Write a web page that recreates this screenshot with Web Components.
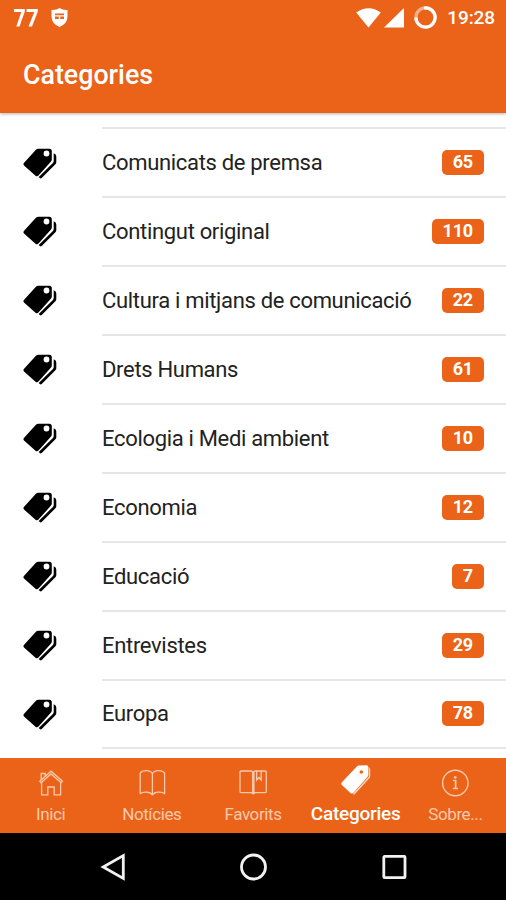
<!DOCTYPE html>
<html lang="ca">
<head>
<meta charset="utf-8">
<title>Categories</title>
<style>
    html, body { margin: 0; height: 100%; }
    body {
        --brand: #ea6319;
        font-family: Roboto, "Liberation Sans", sans-serif;
        background: #fff;
        overflow: hidden;
    }
</style>
</head>
<body>
<app-screen></app-screen>
<script>
const ICONS = {
    tags: `<svg width="34" height="31" viewBox="0 0 34 31">
        <path fill-rule="evenodd" d="M15.500 .8H26.300Q28.800 .8 28.800 3.300V11.600Q28.800 12.800 28 13.600L15.500 27.500Q14 29 12.500 27.700L1 17.400Q-.2 16.200 1.100 14.800L12.700 2Q13.800.8 15.500.8zM23.500 2.600A2.900 2.900 0 1 0 23.500 8.400A2.900 2.900 0 1 0 23.500 2.600z"/>
        <path d="M30.700 5.300Q33.300 6 33.300 8.600V14.300Q33.300 15.400 32.400 16.300L18.700 30Q17.700 30.800 16.800 30L15.700 29L29.900 14.900Q30.700 14 30.700 13z"/></svg>`,
    home: `<svg width="28" height="28" viewBox="0 0 28 28" fill="none" stroke="currentColor" stroke-width="1.300">
        <path d="M4.600 13V25.800H10.800V18H17.200V25.800H23.600V13M2.800 12.200L14 2.200L25.400 12.200L24.200 13.700L14 4.900L4 13.700zM4.200 10.500V4.500H8.200V7"/></svg>`,
    book: `<svg width="28" height="28" viewBox="0 0 28 28" fill="none" stroke="currentColor" stroke-width="1.300" stroke-linejoin="round">
        <path d="M14.400 4.800C12.400 .8 4.500 .8 2.200 4.200V24.700C5 22.400 12 22.400 14.400 25.800C16.800 22.400 23.800 22.400 26.600 24.700V4.200C24.200 .8 16.400 .8 14.400 4.800zV25.800"/></svg>`,
    bookmarks: `<svg width="28" height="28" viewBox="0 0 28 28" fill="none" stroke="currentColor" stroke-width="1.300">
        <path d="M2.200 2H12.400L14.200 3L16 2H26Q27.300 2 27.300 3.200V22.500Q27.300 23.700 26 23.700H16L14.200 25L12.400 23.700H2.200Q1 23.700 1 22.500V3.200Q1 2 2.200 2zM13.600 3V24.500M14.900 3V24.500M17.600 2V11L19.900 8.500L22.200 11V2"/></svg>`,
    pricetag: `<svg width="30" height="30" viewBox="0 0 30 30" fill="currentColor">
        <path fill-rule="evenodd" d="M18 .5L25.300 .2Q27.300.2 27.400 2.200V9.800Q27.400 10.800 26.800 11.600L12.600 27.800Q11 29.300 9.500 28L.9 20Q-.3 18.600.9 17.200L15.600 1.800Q16.600.6 18 .5zM20.300 5.200A1.800 1.800 0 1 0 20.300 8.800A1.800 1.800 0 1 0 20.300 5.200z"/>
        <path d="M28 2.300Q29.200 2.800 29.200 4V11.500Q29.200 12.300 28.600 13L14 29Q13 30 11.800 29.300L27.500 12Q28 11.400 28 10.600z" opacity=".75"/></svg>`,
    info: `<svg width="28" height="28" viewBox="0 0 28 28" fill="none" stroke="currentColor" stroke-width="1.400">
        <circle cx="14.300" cy="14" r="12.700"/><path d="M12 11.500H14.600V19.300M11.800 19.500H17" stroke-width="1.700"/><circle cx="14.200" cy="8.300" r="1.400" fill="currentColor" stroke="none"/></svg>`
};

class StatusBar extends HTMLElement {
    constructor(){
        super()
        this.attachShadow({mode: "open"})
    }

    connectedCallback() {
        this.shadowRoot.innerHTML = `<style>
        :host{
            display: flex;
            align-items: center;
            height: 35px;
            padding: 0 11px 0 14px;
            color: #fff;
        }
        svg{ display: block; fill: #fff; }
        .spacer{ flex: 1; }
        .shield{ margin-left: 13px; }
        .signal{ margin-left: 3px; }
        .ring{ margin-left: 10px; }
        .time{
            margin-left: 10px;
            font-size: 19px;
            font-weight: 500;
            line-height: 36px;
            letter-spacing: -.1px;
            padding-top: 1px;
        }
        </style>
        <svg width="24" height="18" viewBox="0 0 24 18"><path d="M0 0H10.800V2.500L5.500 17.500H2.300L7.300 3H0zM12.600 0H23.800V2.500L18 17.500H14.500L20.300 3H12.600z"/></svg>
        <svg class="shield" width="17" height="19" viewBox="0 0 17 19"><path fill-rule="evenodd" d="M8.500 0Q12 2.500 16.500 2V8.500Q16.500 15.500 8.500 19Q.5 15.500.5 8.500V2Q5 2.500 8.500 0zM4 5.500V7.200H13V5.500zM4 8.500V11H7.800V8.500zM9.200 8.500V11H13V8.500z"/></svg>
        <div class="spacer"></div>
        <svg width="25" height="20" viewBox="0 0 25 20"><path d="M.2 4.500Q12.500-4 24.800 4.500L12.500 19.500z"/></svg>
        <svg class="signal" width="20" height="20" viewBox="0 0 20 20"><path d="M20 0V19.500H0z"/></svg>
        <svg class="ring" width="23" height="23" viewBox="0 0 23 23" style="fill:none;stroke:#fff;stroke-width:3.200">
            <circle cx="11.500" cy="11.500" r="9.600" opacity=".5"/><path d="M10 2A9.600 9.600 0 1 1 1.900 11.500"/></svg>
        <span class="time"><slot></slot></span>`
    }
}

class AppHeader extends HTMLElement {
    constructor(){
        super()
        this.attachShadow({mode: "open"})
    }

    connectedCallback() {
        this.shadowRoot.innerHTML = `<style>
        :host{
            display: block;
            height: 113px;
            flex: none;
            background: var(--brand);
            box-shadow: 0 1px 3px rgba(0,0,0,.3);
            z-index: 1;
        }
        h1{
            margin: 0;
            padding-left: 23px;
            color: #fff;
            font-size: 26.800px;
            font-weight: 500;
            line-height: 80px;
        }
        </style>
        <status-bar>19:28</status-bar>
        <h1><slot></slot></h1>`
    }
}

class CategoryItem extends HTMLElement {
    constructor(){
        super()
        this.attachShadow({mode: "open"})
    }

    connectedCallback() {
        this.shadowRoot.innerHTML = `<style>
        :host{
            display: flex;
            height: 68.950px;
            padding-left: 23px;
        }
        svg{ display: block; margin-top: 18.500px; }
        .inner{
            flex: 1;
            display: flex;
            align-items: center;
            justify-content: space-between;
            box-sizing: border-box;
            margin-left: 45px;
            padding-right: 22px;
            border-bottom: 2px solid #e6e6e6;
        }
        .label{
            font-size: 22px;
            letter-spacing: -.32px;
            color: #222;
            white-space: nowrap;
        }
        .badge{
            padding: 0 11px;
            height: 25px;
            border-radius: 5px;
            background: var(--brand);
            color: #fff;
            font-size: 18px;
            font-weight: 700;
            line-height: 23px;
            letter-spacing: -.2px;
        }
        </style>
        ${ICONS.tags}
        <div class="inner">
            <span class="label"><slot></slot></span>
            <span class="badge">${this.getAttribute('count')}</span>
        </div>`
    }
}

class CategoryList extends HTMLElement {
    constructor(){
        super()
        this.attachShadow({mode: "open"})
    }

    connectedCallback() {
        this.shadowRoot.innerHTML = `<style>
        :host{
            display: block;
            flex: 1;
            min-height: 0;
            overflow: hidden;
            background: #fff;
        }
        .previous{
            height: 14px;
            margin-left: 102px;
            border-bottom: 2px solid #e6e6e6;
        }
        </style>
        <div class="previous"></div>
        <slot></slot>`
    }
}

class TabItem extends HTMLElement {
    constructor(){
        super()
        this.attachShadow({mode: "open"})
    }

    connectedCallback() {
        this.shadowRoot.innerHTML = `<style>
        :host{
            display: flex;
            flex-direction: column;
            align-items: center;
            color: #fac9ab;
            font-size: 17px;
            letter-spacing: -.4px;
        }
        .icon{
            display: flex;
            align-items: center;
            height: 30px;
            margin-top: 10px;
        }
        .label{ line-height: 20px; margin-top: 6px; white-space: nowrap; }
        :host([active]){
            color: #fff;
            font-size: 19px;
            font-weight: 500;
            letter-spacing: -.25px;
            padding-left: 3px;
        }
        :host([active]) .icon{ margin-top: 7px; }
        :host([active]) .label{ margin-top: 9px; }
        </style>
        <span class="icon">${ICONS[this.getAttribute('icon')]}</span>
        <span class="label"><slot></slot></span>`
    }
}

class TabBar extends HTMLElement {
    constructor(){
        super()
        this.attachShadow({mode: "open"})
    }

    connectedCallback() {
        this.shadowRoot.innerHTML = `<style>
        :host{
            display: grid;
            grid-template-columns: repeat(5, minmax(0, 1fr));
            flex: none;
            height: 75px;
            background: var(--brand);
        }
        </style>
        <slot></slot>`
    }
}

class SystemNav extends HTMLElement {
    constructor(){
        super()
        this.attachShadow({mode: "open"})
    }

    connectedCallback() {
        this.shadowRoot.innerHTML = `<style>
        :host{
            display: flex;
            justify-content: center;
            align-items: center;
            gap: 113px;
            flex: none;
            height: 67px;
            background: #000;
        }
        svg{ fill: none; stroke: #f2f2f2; stroke-width: 2.800; }
        </style>
        <svg width="28" height="28" viewBox="0 0 28 28"><path d="M25.300 2.600V25.400L5.200 14z"/></svg>
        <svg width="28" height="28" viewBox="0 0 28 28"><circle cx="14.500" cy="14" r="12"/></svg>
        <svg width="28" height="28" viewBox="0 0 28 28"><rect x="3.800" y="3.400" width="21.200" height="21.200" rx=".8"/></svg>`
    }
}

class AppScreen extends HTMLElement {
    constructor(){
        super()
        this.attachShadow({mode: "open"})
    }

    connectedCallback() {
        this.shadowRoot.innerHTML = `<style>
        :host{
            display: flex;
            flex-direction: column;
            width: 506px;
            height: 900px;
        }
        </style>
        <app-header>Categories</app-header>
        <category-list>
            <category-item count="65">Comunicats de premsa</category-item>
            <category-item count="110">Contingut original</category-item>
            <category-item count="22">Cultura i mitjans de comunicació</category-item>
            <category-item count="61">Drets Humans</category-item>
            <category-item count="10">Ecologia i Medi ambient</category-item>
            <category-item count="12">Economia</category-item>
            <category-item count="7">Educació</category-item>
            <category-item count="29">Entrevistes</category-item>
            <category-item count="78">Europa</category-item>
        </category-list>
        <tab-bar>
            <tab-item icon="home">Inici</tab-item>
            <tab-item icon="book">Notícies</tab-item>
            <tab-item icon="bookmarks">Favorits</tab-item>
            <tab-item icon="pricetag" active>Categories</tab-item>
            <tab-item icon="info">Sobre...</tab-item>
        </tab-bar>
        <system-nav></system-nav>`
    }
}

customElements.define('status-bar', StatusBar);
customElements.define('app-header', AppHeader);
customElements.define('category-item', CategoryItem);
customElements.define('category-list', CategoryList);
customElements.define('tab-item', TabItem);
customElements.define('tab-bar', TabBar);
customElements.define('system-nav', SystemNav);
customElements.define('app-screen', AppScreen);
</script>
</body>
</html>
